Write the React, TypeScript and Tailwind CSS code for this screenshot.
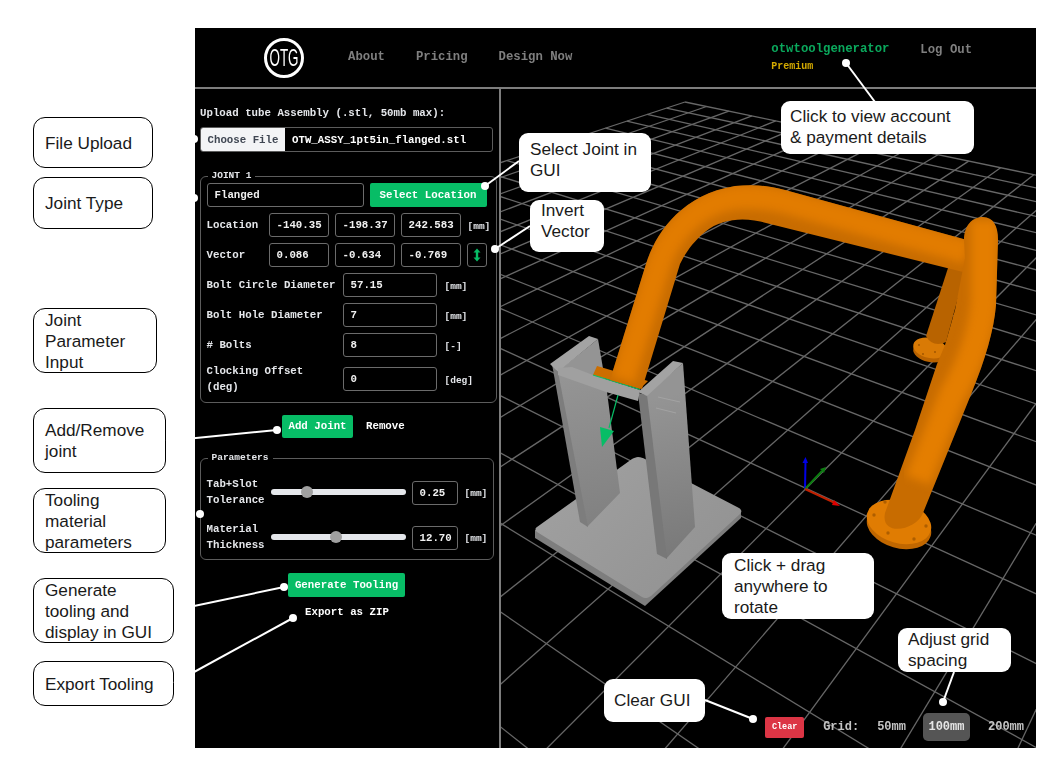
import React from "react";

const GREEN = "bg-[#07bd66]";
const A = { x: 685, y: 102 };
const V1 = { x: -640, y: -174 };
const V2 = { x: 1439, y: -146 };
const a = 0.01603;
const b = 0.02387;
function proj(u: number, v: number) {
  const w = 1 - a * u - b * v;
  return {
    x: (A.x - a * u * V1.x - b * v * V2.x) / w,
    y: (A.y - a * u * V1.y - b * v * V2.y) / w,
  };
}
function gridLines() {
  const out: { x1: number; y1: number; x2: number; y2: number }[] = [];
  const N = 30;
  const minW = 0.04;
  for (let i = 0; i <= N; i++) {
    const vMax = Math.min(N, (1 - minW - a * i) / b);
    const p = proj(i, 0);
    const q = proj(i, vMax);
    out.push({ x1: p.x, y1: p.y, x2: q.x, y2: q.y });
    const uMax = Math.min(N, (1 - minW - b * i) / a);
    const r = proj(0, i);
    const s = proj(uMax, i);
    out.push({ x1: r.x, y1: r.y, x2: s.x, y2: s.y });
  }
  return out;
}

function Label({ className, children }: { className: string; children: React.ReactNode }) {
  return (
    <div className={`flex flex-col justify-center rounded-[12px] border border-black bg-white pl-[11px] text-[17.2px] leading-[21px] text-[#1a1a1a] ${className}`}>
      {children}
    </div>
  );
}

function Callout({ className, children }: { className: string; children: React.ReactNode }) {
  return (
    <div className={`absolute z-20 flex flex-col justify-center rounded-[9px] bg-white text-[17.2px] leading-[21px] text-[#1a1a1a] font-['Liberation_Sans',sans-serif] ${className}`}>
      {children}
    </div>
  );
}

function Box({ value, w }: { value: string; w: string }) {
  return (
    <input
      readOnly
      value={value}
      className={`h-6 rounded-[3px] border border-[#6b6b6b] bg-black pl-[7px] text-[10.75px] font-bold text-[#f1f1f1] outline-none ${w}`}
    />
  );
}

function Unit({ children }: { children: React.ReactNode }) {
  return <span className="text-[9.5px] font-bold text-[#e5e7eb]">{children}</span>;
}

function WideRow({ label, value, unit, tall }: { label: string; value: string; unit: string; tall?: boolean }) {
  return (
    <div className={`flex items-center ${tall ? "h-8" : "h-6"}`}>
      <span className="w-[136px] pr-[4px] text-[10.75px] font-bold leading-4 text-[#e5e7eb]">{label}</span>
      <Box value={value} w="w-[94px]" />
      <span className="ml-2"><Unit>{unit}</Unit></span>
    </div>
  );
}

function SliderRow({ l1, l2, value, thumb }: { l1: string; l2: string; value: string; thumb: number }) {
  return (
    <div className="flex h-8 items-center">
      <span className="w-16 text-[10.75px] font-bold leading-4 text-[#e5e7eb]">
        {l1}
        <br />
        {l2}
      </span>
      <div className="relative h-[6px] w-[135px] rounded-full bg-[#e5e7eb]">
        <div className="absolute top-[-3px] h-3 w-3 rounded-full bg-[#a0a0a0]" style={{ left: thumb }} />
      </div>
      <span className="ml-[6px]"><Box value={value} w="w-[46px]" /></span>
      <span className="ml-[7px]"><Unit>[mm]</Unit></span>
    </div>
  );
}

const ARCH = "M610 380L646 264C655 235 680 195 735 186C755 184 770 186 785 190L967 240L967 273L770 224C750 218 725 216 705 232C693 242 686 252 680 264L642 389Z";
const VERT = "M964 240C964 226 972 217 983 217C993 217 998 226 998 240L996 305C994 330 985 360 972 392L923 513C916 531 880 537 885 513L915 430L937 364L945 345L955 310L965 258Z";

function Scene() {
  const lines = gridLines();
  return (
    <svg viewBox="501 89 535 659" className="absolute inset-0 h-full w-full">
      <defs>
        <linearGradient id="plate" x1="560" y1="470" x2="700" y2="600" gradientUnits="userSpaceOnUse">
          <stop offset="0" stopColor="#a0a0a0" />
          <stop offset="1" stopColor="#929292" />
        </linearGradient>
        <linearGradient id="faceL" x1="560" y1="380" x2="600" y2="530" gradientUnits="userSpaceOnUse">
          <stop offset="0" stopColor="#949494" />
          <stop offset="1" stopColor="#808080" />
        </linearGradient>
        <linearGradient id="faceR" x1="650" y1="400" x2="690" y2="560" gradientUnits="userSpaceOnUse">
          <stop offset="0" stopColor="#949494" />
          <stop offset="1" stopColor="#787878" />
        </linearGradient>
        <filter id="soft" x="-20%" y="-20%" width="140%" height="140%">
          <feGaussianBlur stdDeviation="4" />
        </filter>
        <clipPath id="arch">
          <path d={ARCH} />
        </clipPath>
        <clipPath id="vert">
          <path d={VERT} />
        </clipPath>
      </defs>
      <g stroke="#676767" strokeWidth="1.3">
        {lines.map((l, i) => (
          <line key={i} x1={l.x1} y1={l.y1} x2={l.x2} y2={l.y2} />
        ))}
      </g>

      <g strokeWidth="2" fill="none">
        <line x1="805" y1="489" x2="805.5" y2="462" stroke="#0000e6" />
        <path d="M802.5 463L805.5 457L808 463Z" fill="#0000e6" stroke="none" />
        <line x1="805" y1="489" x2="822" y2="471" stroke="#0c7d10" />
        <path d="M820 469L826 467L824 473Z" fill="#0c7d10" stroke="none" />
        <line x1="805" y1="489" x2="835" y2="503" stroke="#c02000" />
        <path d="M834 500L840 506L832 505Z" fill="#e00000" stroke="none" />
      </g>

      {/* back flange and tube */}
      <ellipse cx="930" cy="352" rx="17" ry="10" fill="#b86200" transform="rotate(12 930 352)" />
      <ellipse cx="930" cy="348" rx="17" ry="10" fill="#d97a05" transform="rotate(12 930 348)" />
      <path d="M948 268L966 268L946 342C938 346 930 344 926 336Z" fill="#b86300" />
      <circle cx="919" cy="345" r="0.9" fill="#9a5200" />
      <circle cx="923" cy="354" r="0.9" fill="#9a5200" />
      <circle cx="935" cy="352" r="0.9" fill="#9a5200" />

      {/* base plate */}
      <path d="M535 530L535 538L645 606L741 518L741 510Z" fill="#7e7e7e" />
      <path d="M638 457C641 457 643 458 645 459L739 508C742 510 742 512 740 514L651 596C648 598 645 599 642 597L537 532C535 530 535 528 537 527L632 459C634 458 636 457 638 457Z" fill="url(#plate)" />

      {/* left upright */}
      <path d="M598 339L607 392L620 493L587 527L557 372Z" fill="url(#faceL)" />
      <path d="M552 364L558 372L588 527L580 522Z" fill="#7d7d7d" />
      <path d="M550 364L589 336L598 339L558 372Z" fill="#a3a3a3" />
      {/* right upright */}
      <path d="M646 395L683 363L695 527L666 559Z" fill="url(#faceR)" />
      <path d="M638 393L647 395L667 559L657 554Z" fill="#787878" />
      <path d="M638 392L673 361L683 363L647 396Z" fill="#a3a3a3" />
      <path d="M658 397L680 402M656 408L676 413" stroke="#a3a3a3" strokeWidth="1" fill="none" />
      {/* crossbar */}
      <path d="M558 368L572 367L593 375L640 390L638 401L606 392L558 375Z" fill="#a0a0a0" />

      {/* orange plate */}
      <path d="M597 366L648 381L640 389L593 375Z" fill="#cc6e00" />
      <line x1="593" y1="375" x2="640" y2="389.5" stroke="#0fbf62" strokeWidth="1.2" />

      {/* arrow */}
      <line x1="618" y1="395" x2="609" y2="428" stroke="#07bd66" strokeWidth="1.2" />
      <path d="M600 427L614 431L602 447Z" fill="#07bd66" />

      {/* arch */}
      <path d={ARCH} fill="#c86c00" />
      <g clipPath="url(#arch)">
        <path d="M623 380L659 264C672 228 702 198 745 197C760 197 775 199 790 203L967 252" fill="none" stroke="#e27c00" strokeWidth="24" filter="url(#soft)" />
      </g>

      {/* front flange */}
      <ellipse cx="899" cy="527" rx="33" ry="21" fill="#c06700" transform="rotate(16 899 527)" />
      <ellipse cx="899" cy="522" rx="33" ry="21" fill="#e07c02" transform="rotate(16 899 522)" />
      <g fill="#ae5e00">
        <circle cx="874" cy="515" r="1.7" />
        <circle cx="888" cy="533" r="1.7" />
        <circle cx="914" cy="539" r="1.7" />
        <circle cx="926" cy="526" r="1.7" />
        <circle cx="885" cy="502" r="1.7" />
      </g>

      {/* vertical tube */}
      <path d={VERT} fill="#c86c00" />
      <g clipPath="url(#vert)">
        <path d="M984 220L984 300C982 330 970 365 952 395L918 480" fill="none" stroke="#e47e00" strokeWidth="26" filter="url(#soft)" />
      </g>
    </svg>
  );
}

function Connectors() {
  const dots: [number, number][] = [
    [194, 139], [194, 198], [277, 430], [200, 514], [284, 587], [293, 618],
    [485, 186], [495, 249], [846, 63], [753, 719], [943, 702],
  ];
  const segs: [number, number, number, number][] = [
    [166, 441, 277, 430], [175, 610, 284, 587], [174, 683, 293, 618],
    [485, 186, 519, 161], [495, 249, 530, 226], [846, 63, 875, 102],
    [705, 700, 753, 719], [943, 702, 954, 672],
  ];
  return (
    <svg viewBox="0 0 1058 771" className="pointer-events-none absolute inset-0 z-10 h-[771px] w-[1058px]">
      {segs.map((s, i) => (
        <line key={i} x1={s[0]} y1={s[1]} x2={s[2]} y2={s[3]} stroke="#fff" strokeWidth="2" />
      ))}
      {dots.map((d, i) => (
        <circle key={i} cx={d[0]} cy={d[1]} r="4" fill="#fff" />
      ))}
    </svg>
  );
}

export default function App() {
  return (
    <div className="relative flex h-[771px] w-[1058px] overflow-hidden bg-white font-['Liberation_Sans',sans-serif]">
      {/* annotation column */}
      <div className="flex w-[195px] shrink-0 flex-col pl-[33px]">
        <Label className="mt-[117px] h-[51px] w-[120px] pt-[2px]">File Upload</Label>
        <Label className="mt-[9px] h-[52px] w-[120px]">Joint Type</Label>
        <Label className="mt-[79px] h-[65px] w-[124px] pt-[2px]"><span>Joint</span><span>Parameter</span><span>Input</span></Label>
        <Label className="mt-[35px] h-[65px] w-[133px]"><span>Add/Remove</span><span>joint</span></Label>
        <Label className="mt-[15px] h-[65px] w-[133px] pt-[2px]"><span>Tooling</span><span>material</span><span>parameters</span></Label>
        <Label className="mt-[25px] h-[65px] w-[141px] pt-[2px]"><span>Generate</span><span>tooling and</span><span>display in GUI</span></Label>
        <Label className="mt-[18px] h-[45px] w-[141px] pt-[2px]">Export Tooling</Label>
      </div>

      {/* app */}
      <div className="mt-[28px] flex h-[720px] w-[841px] shrink-0 flex-col bg-black font-['Liberation_Mono',monospace] blur-[0.35px]">
        <header className="flex h-[61px] shrink-0 items-center border-b-2 border-[#7d7d7d]">
          <div className="ml-[69px] flex h-10 w-10 items-center justify-center rounded-full border-[3px] border-white font-['Liberation_Sans',sans-serif]">
            <span className="inline-block shrink-0 scale-x-[0.56] whitespace-nowrap text-[24px] leading-none text-white">OTG</span>
          </div>
          <nav className="ml-[44px] flex gap-[31px] text-[12.3px] font-bold text-[#7f7f7f]">
            <span>About</span>
            <span>Pricing</span>
            <span>Design Now</span>
          </nav>
          <div className="ml-[199px] mt-[1px] flex w-[149px] flex-col">
            <span className="text-[12.3px] font-bold leading-[17px] text-[#0aa85c]">otwtoolgenerator</span>
            <span className="text-[10px] font-bold leading-[17px] text-[#d4aa00]">Premium</span>
          </div>
          <span className="mb-[14px] text-[12.3px] font-bold text-[#7f7f7f]">Log Out</span>
        </header>

        <div className="flex min-h-0 flex-1">
          <aside className="w-[306px] shrink-0 border-r-2 border-[#7d7d7d] pl-[5px] pr-[7px] text-[#e5e7eb]">
            <div className="mt-[16px] text-[10.75px] font-bold leading-4">Upload tube Assembly (.stl, 50mb max):</div>
            <div className="mt-[6px] flex h-[25px] w-[293px] items-center overflow-hidden rounded-[3px] border border-[#5c5c5c]">
              <button className="h-full w-[84px] bg-[#f3f4f6] pt-[1px] text-[10.75px] font-bold text-[#3f4652]">Choose File</button>
              <span className="ml-[7px] mt-[1px] text-[10.75px] font-bold text-white">OTW_ASSY_1pt5in_flanged.stl</span>
            </div>

            <fieldset className="mt-[18px] h-[233px] w-[293px] rounded-[6px] border-[1.5px] border-[#5c5c5c] px-[5.5px]">
              <legend className="ml-[1px] px-1 text-[9.5px] font-bold leading-[12px]">JOINT 1</legend>
              <div className="mt-[1px] flex flex-col gap-[6px]">
                <div className="flex gap-[6px]">
                  <Box value="Flanged" w="w-[157px]" />
                  <button className={`h-6 w-[117px] rounded-[2px] ${GREEN} text-[10.75px] font-bold text-white`}>Select Location</button>
                </div>
                <div className="flex items-center">
                  <span className="w-[62px] text-[10.75px] font-bold">Location</span>
                  <div className="flex gap-[6px]">
                    <Box value="-140.35" w="w-[60px]" />
                    <Box value="-198.37" w="w-[60px]" />
                    <Box value="242.583" w="w-[60px]" />
                  </div>
                  <span className="ml-[7px]"><Unit>[mm]</Unit></span>
                </div>
                <div className="flex items-center">
                  <span className="w-[62px] text-[10.75px] font-bold">Vector</span>
                  <div className="flex gap-[6px]">
                    <Box value="0.086" w="w-[60px]" />
                    <Box value="-0.634" w="w-[60px]" />
                    <Box value="-0.769" w="w-[60px]" />
                    <div className="flex h-6 w-[20px] items-center justify-center rounded-[3px] border border-[#6b6b6b]">
                      <svg width="8" height="14" viewBox="0 0 8 14">
                        <path d="M4 0.5L7.5 4.5H5.2V9.5H7.5L4 13.5L0.5 9.5H2.8V4.5H0.5Z" fill="#07bd66" />
                      </svg>
                    </div>
                  </div>
                </div>
                <WideRow label="Bolt Circle Diameter" value="57.15" unit="[mm]" />
                <WideRow label="Bolt Hole Diameter" value="7" unit="[mm]" />
                <WideRow label="# Bolts" value="8" unit="[-]" />
                <WideRow label="Clocking Offset (deg)" value="0" unit="[deg]" tall />
              </div>
            </fieldset>

            <div className="mt-[12px] flex items-center pl-[82px]">
              <button className={`h-[23px] w-[71px] rounded-[2px] ${GREEN} text-[10.75px] font-bold text-white`}>Add Joint</button>
              <span className="ml-[13px] text-[10.75px] font-bold text-white">Remove</span>
            </div>

            <fieldset className="mt-[14px] h-[108px] w-[293px] rounded-[6px] border-[1.5px] border-[#5c5c5c] px-[5.5px]">
              <legend className="ml-[1px] px-1 text-[9.5px] font-bold leading-[12px]">Parameters</legend>
              <div className="mt-[12px] flex flex-col gap-[13px]">
                <SliderRow l1="Tab+Slot" l2="Tolerance" value="0.25" thumb={30} />
                <SliderRow l1="Material" l2="Thickness" value="12.70" thumb={59} />
              </div>
            </fieldset>

            <div className="mt-[13px] flex flex-col items-start pl-[88px]">
              <button className={`h-6 w-[117px] rounded-[2px] ${GREEN} text-[10.75px] font-bold text-white`}>Generate Tooling</button>
              <span className="ml-[17px] mt-[7px] text-[10.75px] font-bold text-white">Export as ZIP</span>
            </div>
          </aside>

          <main className="relative min-w-0 flex-1 overflow-hidden">
            <Scene />
            <div className="absolute bottom-[7px] right-[12px] flex items-center text-[12px] font-bold text-[#c4c4c4]">
              <button className="mr-[19px] h-[21px] w-[39px] rounded-[2px] bg-[#dc3545] text-[8.5px] font-bold text-white">Clear</button>
              <span>Grid:</span>
              <span className="ml-[18px]">50mm</span>
              <span className="ml-[17px] flex h-7 w-[47px] items-center justify-center rounded-[5px] bg-[#555555] text-[#e5e5e5]">100mm</span>
              <span className="ml-[18px]">200mm</span>
            </div>
          </main>
        </div>
      </div>

      <Connectors />

      <Callout className="left-[781px] top-[101px] h-[53px] w-[193px] pb-[2px] pl-[9px]"><span>Click to view account</span><span>&amp; payment details</span></Callout>
      <Callout className="left-[519px] top-[133px] h-[59px] w-[132px] pb-[6px] pl-[11px]"><span>Select Joint in</span><span>GUI</span></Callout>
      <Callout className="left-[530px] top-[200px] h-[52px] w-[74px] pb-[10px] pl-[11px]"><span>Invert</span><span>Vector</span></Callout>
      <Callout className="left-[722px] top-[553px] h-[66px] w-[152px] pl-[12px]"><span>Click + drag</span><span>anywhere to</span><span>rotate</span></Callout>
      <Callout className="left-[898px] top-[628px] h-[44px] w-[113px] pl-[10px]"><span>Adjust grid</span><span>spacing</span></Callout>
      <Callout className="left-[604px] top-[679px] h-[43px] w-[101px] pl-[10px]"><span>Clear GUI</span></Callout>
    </div>
  );
}
